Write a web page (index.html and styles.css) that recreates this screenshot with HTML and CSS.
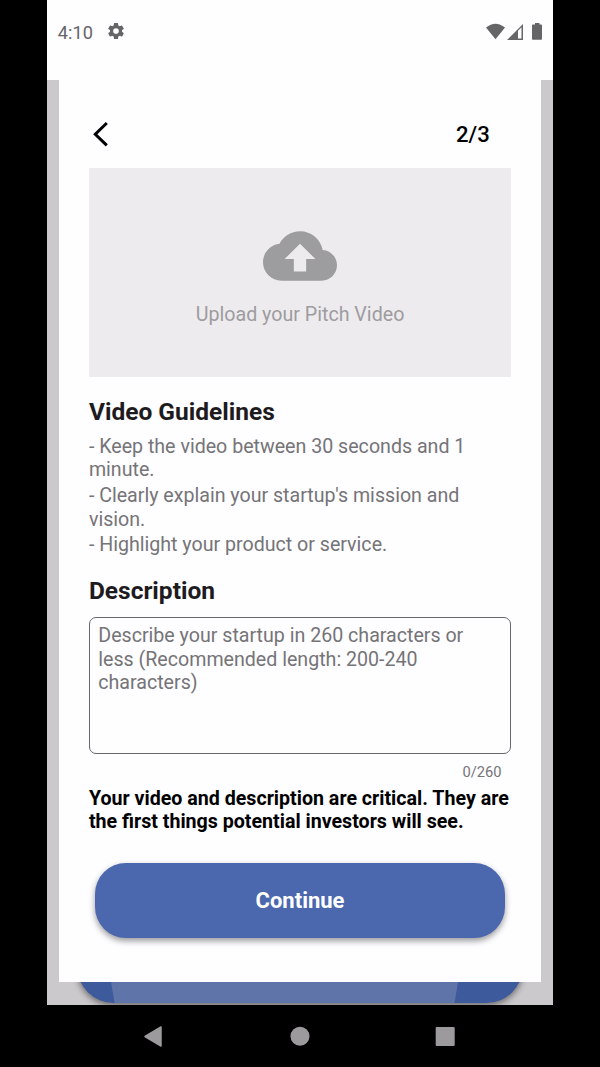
FILE: index.html
```html
<!DOCTYPE html>
<html lang="en">
<head>
<meta charset="utf-8">
<title>Pitch Video</title>
<link rel="stylesheet" href="styles.css">
</head>
<body>
<div class="phone">
  <header class="status">
    <span class="clock">4:10</span>
    <svg class="gear" viewBox="0 0 24 24"><path d="M19.14 12.94c.04-.3.06-.61.06-.94 0-.32-.02-.64-.07-.94l2.03-1.58c.18-.14.23-.41.12-.61l-1.92-3.32c-.12-.22-.37-.29-.59-.22l-2.39.96c-.5-.38-1.03-.7-1.62-.94l-.36-2.54c-.04-.24-.24-.41-.48-.41h-3.84c-.24 0-.43.17-.47.41l-.36 2.54c-.59.24-1.13.57-1.62.94l-2.39-.96c-.22-.08-.47 0-.59.22L2.74 8.87c-.12.21-.08.47.12.61l2.03 1.58c-.05.3-.09.63-.09.94s.02.64.07.94l-2.03 1.58c-.18.14-.23.41-.12.61l1.92 3.32c.12.22.37.29.59.22l2.39-.96c.5.38 1.03.7 1.62.94l.36 2.54c.05.24.24.41.48.41h3.84c.24 0 .44-.17.47-.41l.36-2.54c.59-.24 1.13-.56 1.62-.94l2.39.96c.22.08.47 0 .59-.22l1.92-3.32c.12-.22.07-.47-.12-.61l-2.01-1.58zM12 15.4A3.4 3.4 0 1 1 12 8.6a3.4 3.4 0 0 1 0 6.8z"/></svg>
    <svg class="signals" viewBox="0 0 58 18">
      <path d="M0 4.6Q9.5-3.2 19 4.6L9.5 16.2Z"/>
      <path fill-rule="evenodd" d="M21 17L37 1V17ZM32 7.8V15.5H35.5V4.3Z"/>
      <path d="M46 2.2Q46 1.5 46.8 1.5H49V0H53.5V1.5H55.2Q56 1.5 56 2.2V16Q56 16.8 55.2 16.8H46.8Q46 16.8 46 16Z"/>
    </svg>
  </header>
  <main class="backdrop">
    <section class="sheet">
      <div class="topbar">
        <svg class="back" viewBox="0 0 15 26"><path d="M13.8 2L2.3 13.2L13.8 24.4"/></svg>
        <span class="step">2/3</span>
      </div>
      <div class="upload">
        <svg class="cloud" viewBox="0 0 24 24"><path d="M19.35 10.04C18.67 6.59 15.64 4 12 4 9.11 4 6.6 5.64 5.35 8.04 2.34 8.36 0 10.91 0 14c0 3.31 2.69 6 6 6h13c2.76 0 5-2.24 5-5 0-2.64-2.05-4.78-4.65-4.96zM14 13v4h-4v-4H7l5-5 5 5h-3z"/></svg>
        <span>Upload your Pitch Video</span>
      </div>
      <h2 class="heading guidelines-title">Video Guidelines</h2>
      <div class="guidelines">
        <p>- Keep the video between 30 seconds and 1<br>minute.</p>
        <p>- Clearly explain your startup's mission and<br>vision.</p>
        <p>- Highlight your product or service.</p>
      </div>
      <h2 class="heading description-title">Description</h2>
      <div class="field">Describe your startup in 260 characters or<br>less (Recommended length: 200-240<br>characters)</div>
      <div class="counter">0/260</div>
      <p class="notice">Your video and description are critical. They are<br>the first things potential investors will see.</p>
      <button class="continue">Continue</button>
    </section>
    <div class="peek"><div class="under"><div class="glow"></div></div></div>
  </main>
</div>
<nav class="nav">
  <svg viewBox="0 0 600 62">
    <path class="key" d="M145 31.5L161 22V41Z"/>
    <circle cx="300" cy="31.3" r="9.5"/>
    <rect x="435.7" y="22" width="19" height="19" rx="1"/>
  </svg>
</nav>
</body>
</html>
```
FILE: styles.css
```css
* { box-sizing: border-box; }
body {
  margin: 0;
  width: 600px;
  height: 1067px;
  overflow: hidden;
  background: #000;
  font-family: Roboto, sans-serif;
}
h2, p { margin: 0; }
.phone {
  width: 505.5px;
  height: 1005px;
  margin-left: 47.3px;
  background: #fefdff;
}
.status {
  height: 80px;
  padding: 22px 8.7px 0 10.5px;
  display: flex;
  align-items: flex-start;
  fill: #656467;
}
.clock { font-size: 18.2px; line-height: 22px; color: #656467; }
.gear { width: 20px; height: 20px; margin: -.6px 0 0 13px; }
.signals { width: 58px; height: 18px; margin: 1px 0 0 auto; }
.backdrop { height: 925px; background: #cbc9cc; overflow: hidden; }
.sheet {
  width: 482.3px;
  height: 902px;
  margin: 0 auto;
  padding: 0 30px;
  background: #fefdff;
}
.topbar {
  height: 88px;
  padding: 41px 21.5px 0 4.5px;
  display: flex;
  justify-content: space-between;
}
.back { width: 15px; height: 26px; fill: none; stroke: #000; stroke-width: 3; }
.step { font-size: 22.1px; line-height: 26px; font-weight: 500; }
.upload {
  height: 209px;
  background: #edebee;
  display: flex;
  flex-direction: column;
  align-items: center;
  padding-top: 51px;
  color: #9d9c9e;
  font-size: 19.65px;
  line-height: 23px;
}
.cloud { width: 74px; height: 74px; margin-bottom: 10px; fill: #9d9c9e; }
.heading { font-size: 24.5px; line-height: 29px; font-weight: 700; color: #1d1b20; }
.guidelines-title { margin-top: 20px; }
.guidelines { margin-top: 9px; font-size: 19.62px; line-height: 23.4px; color: #757477; }
.guidelines p { margin-bottom: 2.4px; }
.description-title { margin-top: 19.5px; }
.field {
  height: 137.4px;
  margin-top: 11.6px;
  padding: 6.4px 8.4px;
  border: 1.2px solid #68666b;
  border-radius: 7px;
  color: #757477;
  font-size: 19.62px;
  line-height: 23.4px;
}
.counter {
  margin: 8.7px 9.6px 0 0;
  text-align: right;
  font-size: 14.7px;
  line-height: 18px;
  color: #757477;
}
.notice { margin-top: 6.1px; font-size: 19.64px; line-height: 23.4px; font-weight: 700; }
.continue {
  display: block;
  width: 410px;
  height: 75px;
  margin: 29px auto 0;
  padding: 2px 0 0;
  border: 0;
  border-radius: 31px;
  background: #4b67ae;
  box-shadow: 0 3px 6px rgba(0,0,0,.4);
  color: #fff;
  font: 700 22px/26px Roboto, sans-serif;
}
.peek {
  height: 23px;
  padding-bottom: 2px;
  display: flex;
  align-items: flex-end;
  justify-content: center;
  overflow: hidden;
}
.under {
  flex: none;
  width: 446px;
  height: 75px;
  padding-top: 54px;
  border-radius: 37px;
  background: #3c5a9c;
  box-shadow: 0 3px 6px rgba(0,0,0,.45);
}
.glow {
  height: 21px;
  width: 347px;
  margin: 0 auto 0 34px;
  background: #5f74a8;
  clip-path: polygon(0 0, 100% 0, calc(100% - 3.5px) 100%, 3.5px 100%);
}
.nav { height: 62px; fill: #9d9a9e; }
.nav svg { display: block; width: 600px; height: 62px; }
.key { stroke: #9d9a9e; stroke-width: 1.5; stroke-linejoin: round; }
```
